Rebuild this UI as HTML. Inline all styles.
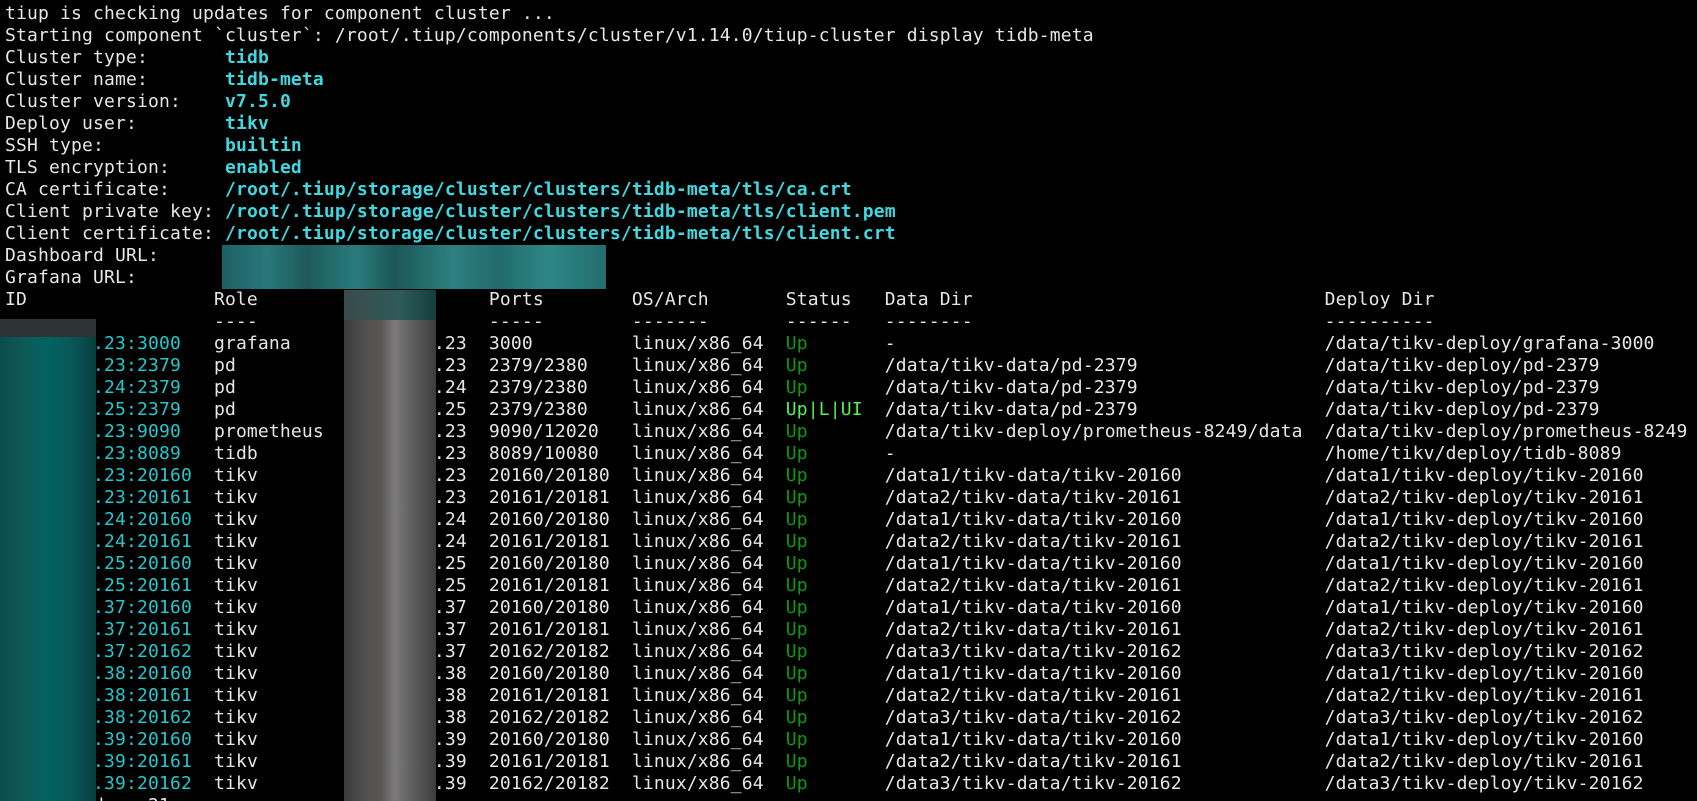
<!DOCTYPE html>
<html><head><meta charset="utf-8"><style>
html,body{margin:0;padding:0;background:#000;width:1697px;height:801px;overflow:hidden;position:relative}
pre{margin:0;padding:3px 0 0 5px;font-family:"DejaVu Sans Mono","Liberation Mono",monospace;font-size:18px;letter-spacing:0.16px;line-height:22px;color:#e6e6e6;white-space:pre}
.c{color:#3fd8e0;font-weight:bold}
.i{color:#22c8cc}
.g{color:#0a9a0a}
.G{color:#55f055}
.b{position:absolute}
</style></head><body>
<pre>tiup is checking updates for component cluster ...
Starting component `cluster`: /root/.tiup/components/cluster/v1.14.0/tiup-cluster display tidb-meta
Cluster type:       <span class="c">tidb</span>
Cluster name:       <span class="c">tidb-meta</span>
Cluster version:    <span class="c">v7.5.0</span>
Deploy user:        <span class="c">tikv</span>
SSH type:           <span class="c">builtin</span>
TLS encryption:     <span class="c">enabled</span>
CA certificate:     <span class="c">/root/.tiup/storage/cluster/clusters/tidb-meta/tls/ca.crt</span>
Client private key: <span class="c">/root/.tiup/storage/cluster/clusters/tidb-meta/tls/client.pem</span>
Client certificate: <span class="c">/root/.tiup/storage/cluster/clusters/tidb-meta/tls/client.crt</span>
Dashboard URL:
Grafana URL:
ID                 Role        Host         Ports        OS/Arch       Status   Data Dir                                Deploy Dir
                   ----                     -----        -------       ------   --------                                ----------
<span class="i">        .23:3000</span>   grafana             .23  3000         linux/x86_64  <span class="g">Up</span>       -                                       /data/tikv-deploy/grafana-3000
<span class="i">        .23:2379</span>   pd                  .23  2379/2380    linux/x86_64  <span class="g">Up</span>       /data/tikv-data/pd-2379                 /data/tikv-deploy/pd-2379
<span class="i">        .24:2379</span>   pd                  .24  2379/2380    linux/x86_64  <span class="g">Up</span>       /data/tikv-data/pd-2379                 /data/tikv-deploy/pd-2379
<span class="i">        .25:2379</span>   pd                  .25  2379/2380    linux/x86_64  <span class="G">Up|L|UI</span>  /data/tikv-data/pd-2379                 /data/tikv-deploy/pd-2379
<span class="i">        .23:9090</span>   prometheus          .23  9090/12020   linux/x86_64  <span class="g">Up</span>       /data/tikv-deploy/prometheus-8249/data  /data/tikv-deploy/prometheus-8249
<span class="i">        .23:8089</span>   tidb                .23  8089/10080   linux/x86_64  <span class="g">Up</span>       -                                       /home/tikv/deploy/tidb-8089
<span class="i">        .23:20160</span>  tikv                .23  20160/20180  linux/x86_64  <span class="g">Up</span>       /data1/tikv-data/tikv-20160             /data1/tikv-deploy/tikv-20160
<span class="i">        .23:20161</span>  tikv                .23  20161/20181  linux/x86_64  <span class="g">Up</span>       /data2/tikv-data/tikv-20161             /data2/tikv-deploy/tikv-20161
<span class="i">        .24:20160</span>  tikv                .24  20160/20180  linux/x86_64  <span class="g">Up</span>       /data1/tikv-data/tikv-20160             /data1/tikv-deploy/tikv-20160
<span class="i">        .24:20161</span>  tikv                .24  20161/20181  linux/x86_64  <span class="g">Up</span>       /data2/tikv-data/tikv-20161             /data2/tikv-deploy/tikv-20161
<span class="i">        .25:20160</span>  tikv                .25  20160/20180  linux/x86_64  <span class="g">Up</span>       /data1/tikv-data/tikv-20160             /data1/tikv-deploy/tikv-20160
<span class="i">        .25:20161</span>  tikv                .25  20161/20181  linux/x86_64  <span class="g">Up</span>       /data2/tikv-data/tikv-20161             /data2/tikv-deploy/tikv-20161
<span class="i">        .37:20160</span>  tikv                .37  20160/20180  linux/x86_64  <span class="g">Up</span>       /data1/tikv-data/tikv-20160             /data1/tikv-deploy/tikv-20160
<span class="i">        .37:20161</span>  tikv                .37  20161/20181  linux/x86_64  <span class="g">Up</span>       /data2/tikv-data/tikv-20161             /data2/tikv-deploy/tikv-20161
<span class="i">        .37:20162</span>  tikv                .37  20162/20182  linux/x86_64  <span class="g">Up</span>       /data3/tikv-data/tikv-20162             /data3/tikv-deploy/tikv-20162
<span class="i">        .38:20160</span>  tikv                .38  20160/20180  linux/x86_64  <span class="g">Up</span>       /data1/tikv-data/tikv-20160             /data1/tikv-deploy/tikv-20160
<span class="i">        .38:20161</span>  tikv                .38  20161/20181  linux/x86_64  <span class="g">Up</span>       /data2/tikv-data/tikv-20161             /data2/tikv-deploy/tikv-20161
<span class="i">        .38:20162</span>  tikv                .38  20162/20182  linux/x86_64  <span class="g">Up</span>       /data3/tikv-data/tikv-20162             /data3/tikv-deploy/tikv-20162
<span class="i">        .39:20160</span>  tikv                .39  20160/20180  linux/x86_64  <span class="g">Up</span>       /data1/tikv-data/tikv-20160             /data1/tikv-deploy/tikv-20160
<span class="i">        .39:20161</span>  tikv                .39  20161/20181  linux/x86_64  <span class="g">Up</span>       /data2/tikv-data/tikv-20161             /data2/tikv-deploy/tikv-20161
<span class="i">        .39:20162</span>  tikv                .39  20162/20182  linux/x86_64  <span class="g">Up</span>       /data3/tikv-data/tikv-20162             /data3/tikv-deploy/tikv-20162
Total nodes: 21</pre>
<div class="b" style="left:222px;top:245px;width:384px;height:44px;background:linear-gradient(90deg,#1f5f63 0%,#28787a 12%,#1d5a5c 22%,#2a7b7d 35%,#1c5758 45%,#2d8080 60%,#226a6b 72%,#2e8786 85%,#236d6e 100%)"></div>
<div class="b" style="left:344px;top:290px;width:92px;height:30px;background:linear-gradient(90deg,#3a4a4a,#2f5b5b 60%,#153d3d)"></div>
<div class="b" style="left:344px;top:320px;width:92px;height:481px;background:linear-gradient(90deg,#3a3a3a 0%,#4e4e4e 20%,#5a5555 40%,#7a7a7a 55%,#5e5e5e 75%,#3c3c3c 100%)"></div>
<div class="b" style="left:0;top:319px;width:96px;height:18px;background:#2e3434"></div>
<div class="b" style="left:0;top:337px;width:96px;height:464px;background:linear-gradient(90deg,#0c4d4d 0%,#0e5a5a 30%,#006362 50%,#0a5656 75%,#083f40 100%)"></div>
</body></html>
